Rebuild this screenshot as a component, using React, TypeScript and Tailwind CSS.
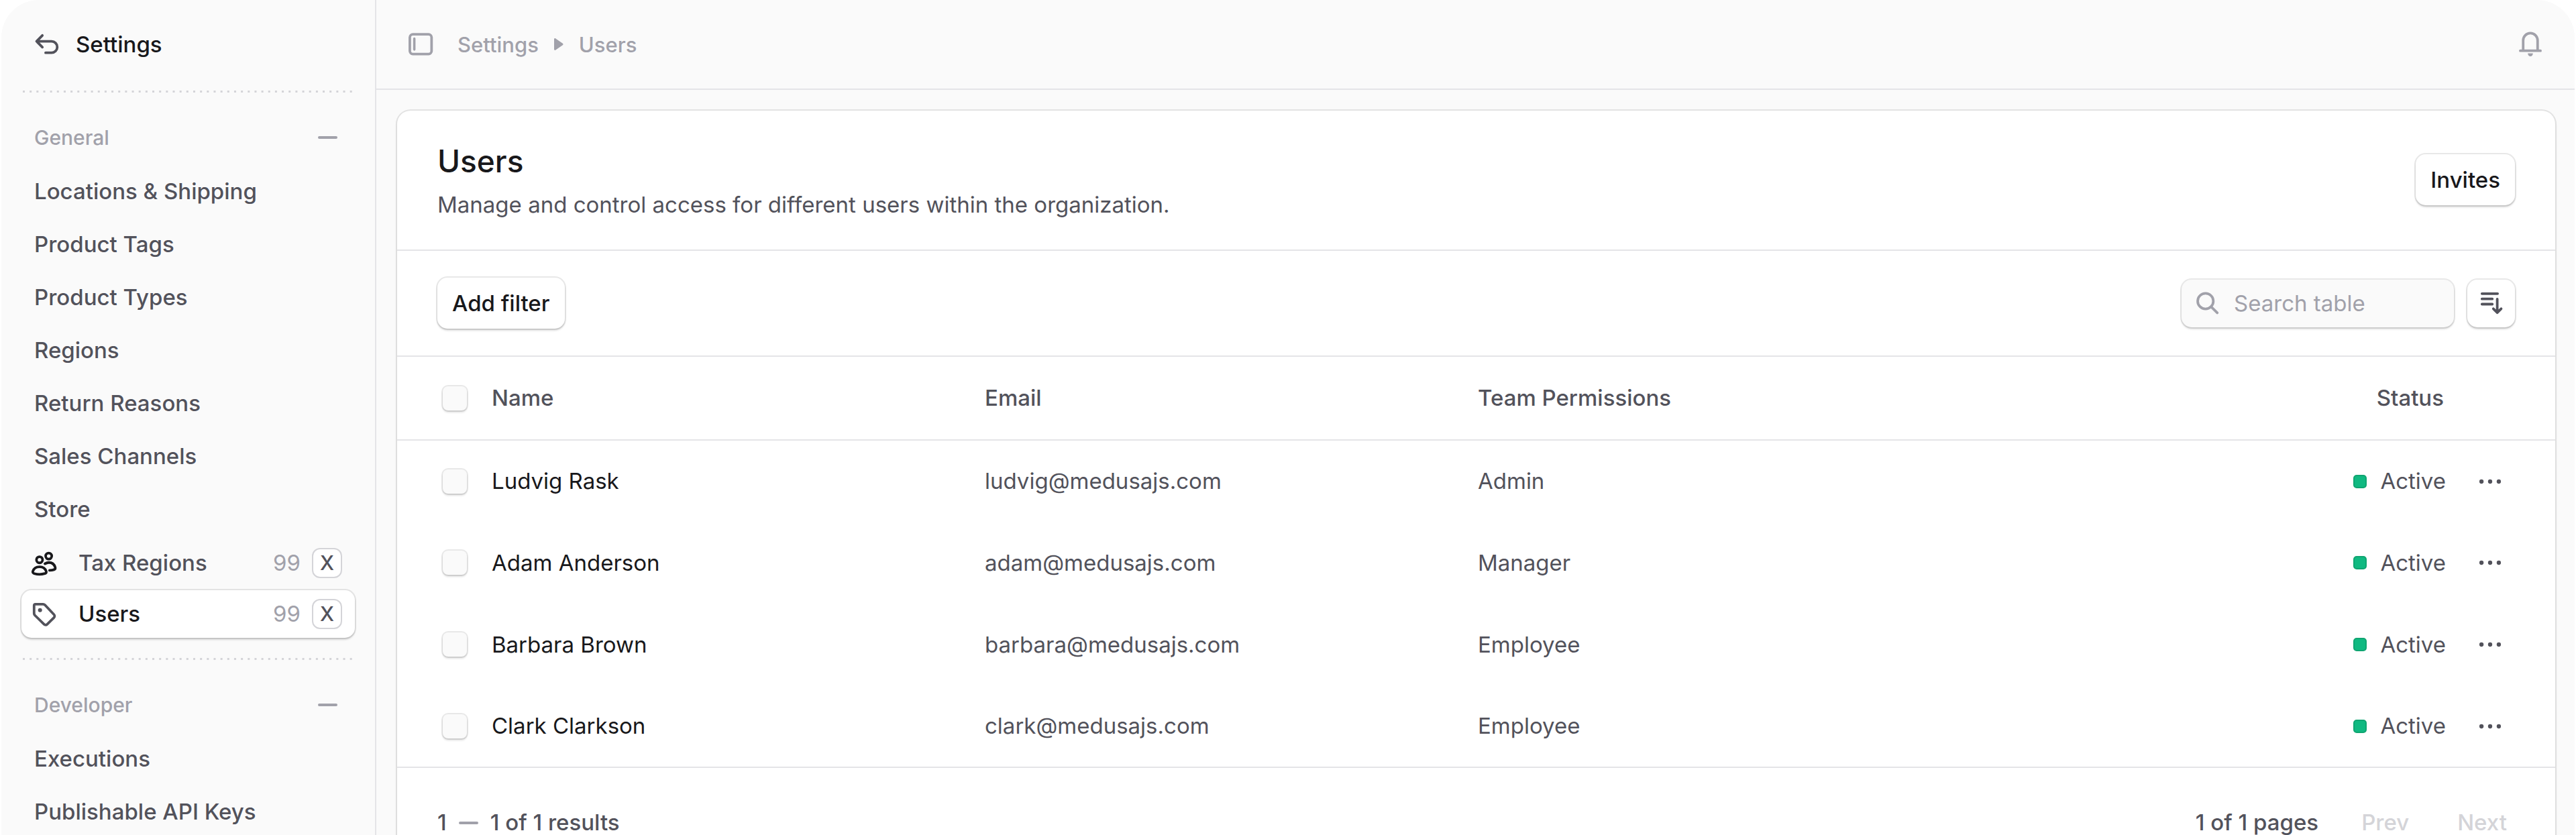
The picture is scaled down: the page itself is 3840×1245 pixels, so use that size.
import React from 'react';

type NavItem = {
  label: string;
  icon?: 'users' | 'tag';
  count?: number;
  shortcut?: string;
  active?: boolean;
};

const GENERAL: NavItem[] = [
  { label: 'Locations & Shipping' },
  { label: 'Product Tags' },
  { label: 'Product Types' },
  { label: 'Regions' },
  { label: 'Return Reasons' },
  { label: 'Sales Channels' },
  { label: 'Store' },
];

const GENERAL_ICONS: NavItem[] = [
  { label: 'Tax Regions', icon: 'users', count: 99, shortcut: 'X' },
  { label: 'Users', icon: 'tag', count: 99, shortcut: 'X', active: true },
];

const DEVELOPER: NavItem[] = [{ label: 'Executions' }, { label: 'Publishable API Keys' }];

const USERS = [
  { name: 'Ludvig Rask', email: 'ludvig@medusajs.com', role: 'Admin', status: 'Active' },
  { name: 'Adam Anderson', email: 'adam@medusajs.com', role: 'Manager', status: 'Active' },
  { name: 'Barbara Brown', email: 'barbara@medusajs.com', role: 'Employee', status: 'Active' },
  { name: 'Clark Clarkson', email: 'clark@medusajs.com', role: 'Employee', status: 'Active' },
];

const stroke = {
  fill: 'none',
  stroke: 'currentColor',
  strokeWidth: 1.5,
  strokeLinecap: 'round' as const,
  strokeLinejoin: 'round' as const,
};

const BackIcon = () => (
  <svg viewBox="0 0 15 15" className="size-[38px] text-[#52525b]" {...stroke}>
    <path d="M4.8 2.3 1.4 5.8l3.400 3.400M1.500 5.800h8.700a3.350 3.350 0 0 1 0 6.700H6.700" />
  </svg>
);

const SidebarIcon = () => (
  <svg viewBox="0 0 15 15" className="block size-[38px]" {...stroke}>
    <rect x="1.15" y="1.65" width="12.8" height="11.6" rx="1.8" />
    <path d="M3.8 4.2v6.400" strokeWidth={1.4} />
  </svg>
);

const BellIcon = () => (
  <svg viewBox="0 0 15 15" className="block size-[38px]" {...stroke}>
    <path d="M3.250 11.200V5.200a4.250 4.250 0 0 1 8.500 0V11.200M1.550 11.300h11.900" />
    <path d="M6 12.800h3a1.500 1.800 0 0 1-3 0Z" fill="currentColor" stroke="none" />
  </svg>
);

const TeamIcon = () => (
  <svg viewBox="0 0 15 15" className="size-[38px] text-[#18181b]" {...stroke}>
    <circle cx="4.700" cy="5.400" r="1.800" />
    <circle cx="10.100" cy="3.200" r="1.800" />
    <path d="M4.700 9.500c1.900 0 3.400 1.100 3.900 2.600.2.700-.1 1.200-.8 1.400a11 11 0 0 1-6.200 0c-.7-.2-1-.7-.8-1.400.5-1.500 2-2.600 3.900-2.600Z" />
    <path d="M7.900 7.700c.7-.4 1.500-.7 2.300-.7 1.800 0 3.200 1.100 3.700 2.800.2.700-.1 1.200-.7 1.400-.8.300-1.700.4-2.600.4" />
  </svg>
);

const TagIcon = () => (
  <svg viewBox="0 0 15 15" className="size-[38px] text-[#52525b]" {...stroke}>
    <path d="M1.500 2.300v4.600c0 .4.2.8.4 1.100l5.500 5.400c.5.500 1.300.5 1.800 0l4-4c.5-.5.5-1.300 0-1.800L7.800 1.900c-.3-.3-.6-.4-1-.4H2.300a.8.8 0 0 0-.8.8Z" />
    <circle cx="5" cy="5" r="1.200" fill="currentColor" stroke="none" />
  </svg>
);

const SearchIcon = () => (
  <svg viewBox="0 0 15 15" className="size-[38px] shrink-0 text-[#a1a1aa]" {...stroke}>
    <circle cx="6.200" cy="6.300" r="4.600" />
    <path d="m9.600 9.700 3.500 3.500" />
  </svg>
);

const SortIcon = () => (
  <svg viewBox="0 0 15 15" className="size-[38px] text-[#52525b]" {...stroke}>
    <path d="M1.900 1.900h9.200M1.900 5h6.100M1.900 8.100h6.100M10.900 5.100v8M8.600 10.800l2.300 2.300 2.300-2.300" />
  </svg>
);

const DotsIcon = () => (
  <svg viewBox="0 0 15 15" className="size-[38px] text-[#52525b]" fill="currentColor">
    <circle cx="2.400" cy="7.500" r="1.250" />
    <circle cx="7.500" cy="7.500" r="1.250" />
    <circle cx="12.600" cy="7.500" r="1.250" />
  </svg>
);

const MinusIcon = () => <span className="block h-1 w-[29px] rounded-full bg-[#a1a1aa]" />;

const Divider = () => (
  <svg className="mx-0.5 h-[3px] w-[calc(100%-4px)]" aria-hidden="true">
    <line x1="0" y1="1.5" x2="100%" y2="1.5" stroke="#d4d4d8" strokeWidth="3" strokeDasharray="3 7.16" />
  </svg>
);

const NavSection = ({ title, items, children }: { title: string; items: NavItem[]; children?: React.ReactNode }) => (
  <section className="pt-[29px]">
    <button className="flex h-[76px] w-full items-center justify-between pr-[26px] pl-[19px] text-[30px] font-medium text-[#a1a1aa]">
      {title}
      <MinusIcon />
    </button>
    <ul className="flex flex-col gap-[3px] pt-1">
      {items.map(item => (
        <li key={item.label}>
          <a href="#" className="flex h-[76px] items-center px-[19px] font-medium text-[#52525b]">{item.label}</a>
        </li>
      ))}
    </ul>
    {children}
  </section>
);

const IconNavLink = ({ item }: { item: NavItem }) => (
  <a
    href="#"
    className={`flex h-[71px] items-center rounded-[15px] pr-[19px] pl-[15px] font-medium ${
      item.active
        ? 'bg-white text-[#18181b] shadow-[0_0_0_2px_rgba(0,0,0,0.09),0_3px_3px_rgba(0,0,0,0.14)]'
        : 'text-[#52525b]'
    }`}
  >
    {item.icon === 'users' ? <TeamIcon /> : <TagIcon />}
    <span className="flex-1 pl-8">{item.label}</span>
    <span className="pr-[17px] font-normal text-[#a1a1aa]">{item.count}</span>
    <kbd className="flex size-[45px] items-center justify-center rounded-[12px] border-2 border-[#d4d4d8] bg-white text-[30px] font-medium text-[#52525b] [font-family:inherit]">
      {item.shortcut}
    </kbd>
  </a>
);

const Checkbox = ({ label }: { label: string }) => (
  <input
    type="checkbox"
    aria-label={label}
    className="block size-9 appearance-none rounded-[8px] bg-[#fafafa] shadow-[0_0_0_2px_rgba(0,0,0,0.09),0_3px_3px_rgba(0,0,0,0.12)] checked:bg-[#3b82f6]"
  />
);

const buttonStyle =
  'flex items-center justify-center rounded-[15px] bg-white font-medium text-[#18181b] shadow-[0_0_0_2px_rgba(0,0,0,0.09),0_3px_3px_rgba(0,0,0,0.14)]';

export default function App() {
  return (
    <div className="h-screen overflow-hidden bg-white px-0.5 font-['Inter',sans-serif] text-[33px] leading-[51px] text-[#52525b]">
      <div className="flex min-h-full rounded-t-[56px] bg-[#fafafa]">
        <aside className="w-[559px] shrink-0 border-r-2 border-[#e4e4e7] px-[30px]">
          <a href="#" className="mb-[3px] flex h-[132px] items-center gap-6 px-[19px] font-medium text-[#18181b]">
            <BackIcon />
            Settings
          </a>
          <Divider />
          <NavSection title="General" items={GENERAL}>
            <div className="flex flex-col gap-[5px] pt-[7px]">
              {GENERAL_ICONS.map(item => (
                <IconNavLink key={item.label} item={item} />
              ))}
            </div>
          </NavSection>
          <div className="pt-[30px]">
            <Divider />
          </div>
          <NavSection title="Developer" items={DEVELOPER} />
        </aside>

        <div className="min-w-0 flex-1">
          <header className="flex h-[134px] items-center justify-between border-b-2 border-[#e4e4e7] px-[47px] text-[#a1a1aa]">
            <div className="flex items-center">
              <button aria-label="Toggle sidebar">
                <SidebarIcon />
              </button>
              <nav aria-label="Breadcrumb" className="flex items-center gap-[23px] pl-9 text-[31px] font-medium">
                <a href="#">Settings</a>
                <svg viewBox="0 0 14 18" className="h-[18px] w-[14px]" fill="currentColor">
                  <path d="M0 1.5C0 .3 1.3-.3 2.3.4l10.500 7.300c.9.6.9 2 0 2.600L2.300 17.600C1.300 18.300 0 17.700 0 16.500Z" />
                </svg>
                <a href="#">Users</a>
              </nav>
            </div>
            <button aria-label="Notifications">
              <BellIcon />
            </button>
          </header>

          <main className="p-[31px] pr-[29px]">
            <div className="rounded-[20px] bg-white shadow-[0_0_0_2px_rgba(0,0,0,0.09),0_3px_5px_rgba(0,0,0,0.06)]">
              <div className="flex items-center justify-between border-b-2 border-[#e4e4e7] px-[60px] pt-10 pb-[41px]">
                <div className="flex flex-col gap-1">
                  <h1 className="text-[46px] leading-[71px] font-medium text-[#18181b]">Users</h1>
                  <p>Manage and control access for different users within the organization.</p>
                </div>
                <button className={`${buttonStyle} h-[76px] px-[22px]`}>Invites</button>
              </div>

              <div className="flex items-center justify-between border-b-2 border-[#e4e4e7] px-[60px] py-10">
                <button className={`${buttonStyle} h-[76px] px-[22px]`}>Add filter</button>
                <div className="flex items-center gap-5">
                  <label className="flex h-[71px] w-[406px] items-center gap-5 rounded-[15px] bg-[#fafafa] px-5 shadow-[0_0_0_2px_rgba(0,0,0,0.09),0_3px_3px_rgba(0,0,0,0.12)]">
                    <SearchIcon />
                    <input
                      type="search"
                      aria-label="Search table"
                      placeholder="Search table"
                      className="w-full min-w-0 bg-transparent outline-none placeholder:text-[#a1a1aa]"
                    />
                  </label>
                  <button aria-label="Sort" className={`${buttonStyle} size-[71px]`}>
                    <SortIcon />
                  </button>
                </div>
              </div>

              <table className="w-full table-fixed text-left">
                <thead>
                  <tr className="h-[124px] border-b-2 border-[#e4e4e7]">
                    <th className="w-[141px] pl-[68px]"><Checkbox label="Select all" /></th>
                    <th className="w-[735px] font-medium">Name</th>
                    <th className="w-[735px] font-medium">Email</th>
                    <th className="font-medium">Team Permissions</th>
                    <th className="w-[300px] pr-[10px] text-right font-medium">Status</th>
                    <th className="w-[156px]" aria-label="Actions" />
                  </tr>
                </thead>
                <tbody className="border-b-2 border-[#e4e4e7]">
                  {USERS.map(user => (
                    <tr key={user.email} className="h-[122px]">
                      <td className="pl-[68px]"><Checkbox label={`Select ${user.name}`} /></td>
                      <td className="text-[#18181b]">{user.name}</td>
                      <td>{user.email}</td>
                      <td>{user.role}</td>
                      <td>
                        <div className="flex items-center justify-end gap-5 pr-[7px]">
                          <span className="size-5 rounded-[5px] border-2 border-[#0fa571] bg-[#10b981]" />
                          {user.status}
                        </div>
                      </td>
                      <td className="pl-10">
                        <button aria-label={`Actions for ${user.name}`} className="block">
                          <DotsIcon />
                        </button>
                      </td>
                    </tr>
                  ))}
                </tbody>
              </table>

              <div className="flex items-center justify-between px-[60px] py-14 font-medium">
                <div className="flex items-center gap-[18px]">
                  1
                  <MinusIcon />
                  1 of 1 results
                </div>
                <div className="flex items-center">
                  <span>1 of 1 pages</span>
                  <button disabled className="pl-16 text-[#d4d4d8]">Prev</button>
                  <button disabled className="pr-3 pl-[72px] text-[#d4d4d8]">Next</button>
                </div>
              </div>
            </div>
          </main>
        </div>
      </div>
    </div>
  );
}
